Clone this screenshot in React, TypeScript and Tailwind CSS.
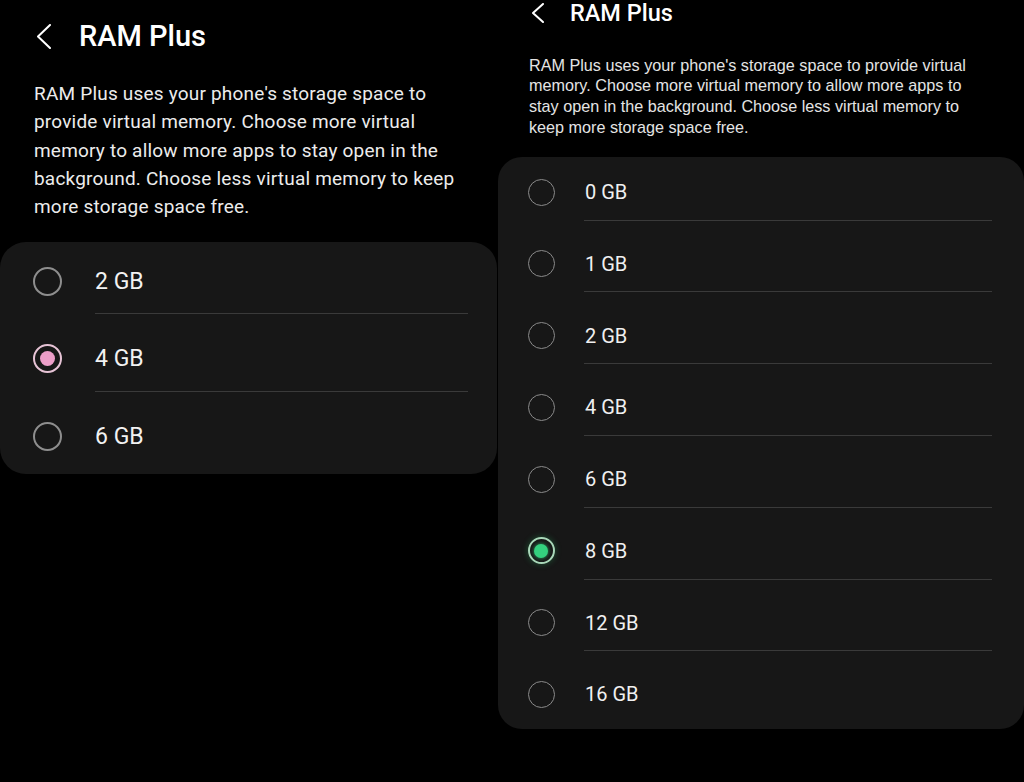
import React from "react";

const font = { fontFamily: "Roboto, 'Noto Sans', Arial, sans-serif" };

function Chevron({ w, h }: { w: number; h: number }) {
  return (
    <svg width={w} height={h} viewBox={`0 0 ${w} ${h}`} fill="none">
      <polyline
        points={`${w - 1},1 1,${h / 2} ${w - 1},${h - 1}`}
        stroke="#ffffff"
        strokeWidth="2"
        strokeLinecap="round"
        strokeLinejoin="round"
      />
    </svg>
  );
}

function RadioL({ on }: { on?: boolean }) {
  if (on)
    return (
      <div className="w-[29px] h-[29px] rounded-full border-[2.5px] border-[#e6c3d5] flex items-center justify-center shrink-0">
        <div className="w-[15px] h-[15px] rounded-full bg-[#ec9ec8]" />
      </div>
    );
  return <div className="w-[29px] h-[29px] rounded-full border-[2px] border-[#8e8e8e] shrink-0" />;
}

function RadioR({ on }: { on?: boolean }) {
  if (on)
    return (
      <div className="w-[27px] h-[27px] rounded-full border-[2px] border-[#a9d8b9] flex items-center justify-center shrink-0 shadow-[0_0_6px_rgba(40,200,110,0.35)]">
        <div className="w-[14px] h-[14px] rounded-full bg-[#34d07e] shadow-[0_0_4px_rgba(52,208,126,0.8)]" />
      </div>
    );
  return <div className="w-[27px] h-[27px] rounded-full border-[1.5px] border-[#8a8a8a] shrink-0" />;
}

const leftItems = [
  { label: "2 GB" },
  { label: "4 GB", on: true },
  { label: "6 GB" },
];

const rightItems = [
  { label: "0 GB" },
  { label: "1 GB" },
  { label: "2 GB" },
  { label: "4 GB" },
  { label: "6 GB" },
  { label: "8 GB", on: true },
  { label: "12 GB" },
  { label: "16 GB" },
];

export default function App() {
  return (
    <div className="w-[1024px] h-[782px] bg-black flex overflow-hidden" style={font}>
      {/* Left screen */}
      <div className="w-[498px] shrink-0 flex flex-col">
        <div className="flex items-center h-[48px] mt-[12px] pl-[37px]">
          <Chevron w={14} h={25} />
          <div className="ml-[28px] text-[29px] leading-[34px] font-medium text-white">RAM Plus</div>
        </div>
        <div className="mt-[20px] pl-[34px] text-[19px] tracking-[0.2px] leading-[28.3px] text-[#ececec] whitespace-nowrap">
          <div>RAM Plus uses your phone's storage space to</div>
          <div>provide virtual memory. Choose more virtual</div>
          <div>memory to allow more apps to stay open in the</div>
          <div>background. Choose less virtual memory to keep</div>
          <div>more storage space free.</div>
        </div>
        <div className="mt-[20.5px] w-[497px] rounded-[26px] bg-[#171717]">
          {leftItems.map((it, i) => {
            const first = i === 0;
            const last = i === leftItems.length - 1;
            return (
              <div key={it.label}>
                <div
                  className={
                    "flex items-center pl-[33px] " +
                    (first ? "pt-[25.5px] " : "pt-[30.5px] ") +
                    (last ? "pb-[22.5px]" : first ? "pb-[16.5px]" : "pb-[17.5px]")
                  }
                >
                  <RadioL on={it.on} />
                  <div className="ml-[33px] text-[23px] leading-none text-[#f2f2f2]">{it.label}</div>
                </div>
                {!last && <div className="h-px bg-[#3a3a3a] ml-[95px] mr-[29px]" />}
              </div>
            );
          })}
        </div>
      </div>

      {/* Right screen */}
      <div className="flex-1 flex flex-col">
        <div className="flex items-center h-[26px] pl-[34px]">
          <Chevron w={12} h={20} />
          <div className="ml-[26px] text-[23.5px] leading-[26px] font-medium text-white">RAM Plus</div>
        </div>
        <div
          className="mt-[28.6px] pl-[31px] text-[16.2px] leading-[20.7px] text-[#e4e4e4] whitespace-nowrap"
          style={{ fontFamily: "'Liberation Sans', Arial, sans-serif" }}
        >
          <div>RAM Plus uses your phone's storage space to provide virtual</div>
          <div>memory. Choose more virtual memory to allow more apps to</div>
          <div>stay open in the background. Choose less virtual memory to</div>
          <div>keep more storage space free.</div>
        </div>
        <div className="mt-[19.6px] w-full rounded-[24px] bg-[#171717]">
          {rightItems.map((it, i) => {
            const first = i === 0;
            const last = i === rightItems.length - 1;
            return (
              <div key={it.label}>
                <div
                  className={
                    "flex items-center pl-[29.5px] " +
                    (first ? "pt-[21.5px] " : "pt-[29.7px] ") +
                    (last ? "pb-[21.5px]" : "pb-[14.1px]")
                  }
                >
                  <RadioR on={it.on} />
                  <div className="ml-[30.5px] text-[20px] leading-none text-[#f0f0f0]">{it.label}</div>
                </div>
                {!last && <div className="h-px bg-[#3a3a3a] ml-[86px] mr-[32px]" />}
              </div>
            );
          })}
        </div>
      </div>
    </div>
  );
}
